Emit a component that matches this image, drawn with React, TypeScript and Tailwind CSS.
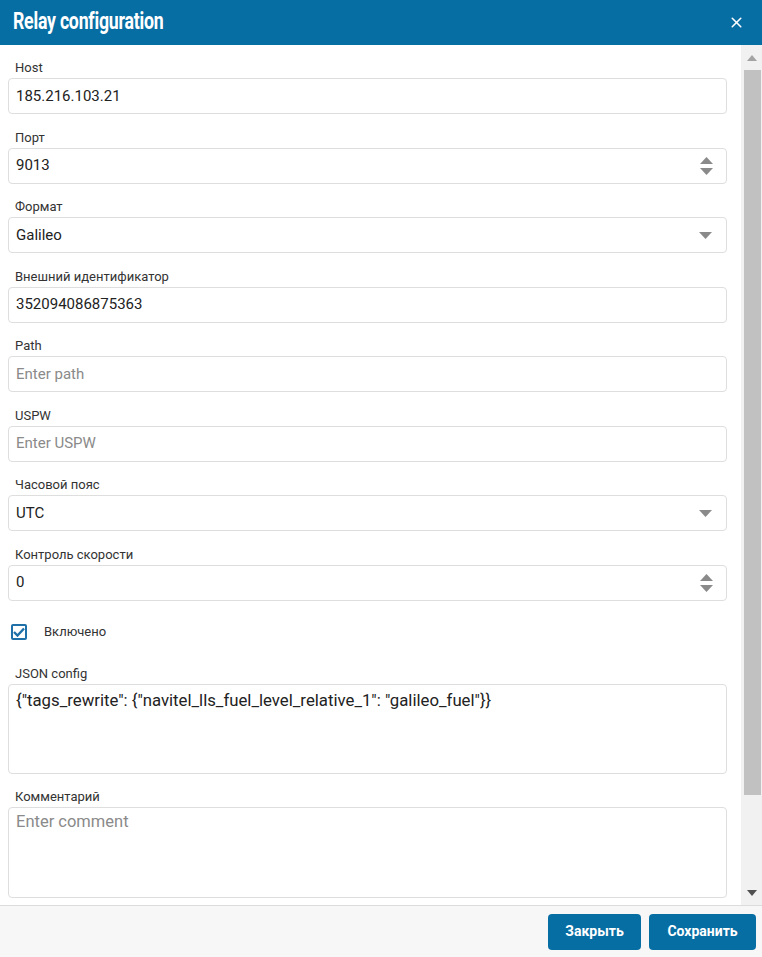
import { X } from "lucide-react";

const font = { fontFamily: "Roboto, 'Liberation Sans', sans-serif" };

function Label({ children }: { children: React.ReactNode }) {
  return <div className="px-[7px] h-[20px] leading-[20px] text-[13px] text-[#333]">{children}</div>;
}

function Spinner() {
  return (
    <div className="flex flex-col items-center gap-[4px] mr-[13px]">
      <svg width="13" height="7" viewBox="0 0 13 7">
        <path d="M0 7 L6.5 0 L13 7 Z" fill="#8a8a8a" />
      </svg>
      <svg width="13" height="7" viewBox="0 0 13 7">
        <path d="M0 0 L6.5 7 L13 0 Z" fill="#8a8a8a" />
      </svg>
    </div>
  );
}

function Caret() {
  return (
    <svg width="13" height="7" viewBox="0 0 13 7" className="mr-[14px]">
      <path d="M0 0 L6.5 7 L13 0 Z" fill="#8a8a8a" />
    </svg>
  );
}

function Field({
  label,
  value,
  placeholder,
  suffix,
}: {
  label: string;
  value?: string;
  placeholder?: string;
  suffix?: React.ReactNode;
}) {
  return (
    <div className="flex flex-col">
      <Label>{label}</Label>
      <div className="h-[36px] rounded-[4px] border border-[#dedede] bg-white flex items-center justify-between pl-[7px]">
        <span className={value ? "text-[15px] text-[#222]" : "text-[15px] text-[#8a8a8a]"}>
          {value ?? placeholder}
        </span>
        {suffix}
      </div>
    </div>
  );
}

export default function App() {
  return (
    <div className="w-[762px] h-[957px] flex flex-col bg-white overflow-hidden" style={font}>
      <header className="h-[45px] shrink-0 bg-[#076ea4] flex items-center justify-between pl-[13px] pr-[17px]">
        <h1 className="inline-block origin-left scale-x-[0.77] whitespace-nowrap text-white text-[23px] font-bold tracking-[-0.3px]">
          Relay configuration
        </h1>
        <X className="w-[17px] h-[17px] text-white" strokeWidth={2.2} />
      </header>

      <div className="flex-1 flex min-h-0">
        <div className="flex-1 overflow-hidden pl-[8px] pr-[14px] pt-[13px] flex flex-col gap-[13.5px]">
          <Field label="Host" value="185.216.103.21" />
          <Field label="Порт" value="9013" suffix={<Spinner />} />
          <Field label="Формат" value="Galileo" suffix={<Caret />} />
          <Field label="Внешний идентификатор" value="352094086875363" />
          <Field label="Path" placeholder="Enter path" />
          <Field label="USPW" placeholder="Enter USPW" />
          <Field label="Часовой пояс" value="UTC" suffix={<Caret />} />
          <Field label="Контроль скорости" value="0" suffix={<Spinner />} />

          <div className="flex items-center h-[36px] shrink-0 pl-[3px]">
            <div className="w-[16px] h-[16px] border-2 border-[#1f6fa8] rounded-[2px] bg-white flex items-center justify-center">
              <svg width="12" height="10" viewBox="0 0 12 10">
                <path d="M1 5 L4.5 8.5 L11 1.5" stroke="#1f6fa8" strokeWidth="2.4" fill="none" />
              </svg>
            </div>
            <span className="ml-[17px] text-[13px] text-[#333]">Включено</span>
          </div>

          <div className="flex flex-col">
            <Label>JSON config</Label>
            <div className="h-[90px] shrink-0 rounded-[4px] border border-[#dedede] bg-white px-[7px] pt-[1px] leading-[28px] text-[16.75px] text-[#222]">
              {'{"tags_rewrite": {"navitel_lls_fuel_level_relative_1": "galileo_fuel"}}'}
            </div>
          </div>

          <div className="flex flex-col">
            <Label>Комментарий</Label>
            <div className="h-[91px] shrink-0 rounded-[4px] border border-[#dedede] bg-white px-[7px] leading-[28px] text-[16.5px] text-[#8a8a8a]">
              Enter comment
            </div>
          </div>
        </div>

        <div className="w-[21px] shrink-0 bg-[#f1f1f1] flex flex-col items-center">
          <div className="h-[25px] w-full flex items-center justify-center">
            <svg width="10" height="6" viewBox="0 0 10 6">
              <path d="M0 6 L5 0 L10 6 Z" fill="#a3a3a3" />
            </svg>
          </div>
          <div className="w-[17px] ml-[2px] h-[725px] bg-[#c1c1c1]" />
          <div className="flex-1" />
          <div className="h-[25px] w-full flex items-center justify-center">
            <svg width="10" height="6" viewBox="0 0 10 6">
              <path d="M0 0 L5 6 L10 0 Z" fill="#505050" />
            </svg>
          </div>
        </div>
      </div>

      <footer className="h-[52px] shrink-0 border-t border-[#dcdcdc] bg-[#f7f7f7] flex items-center justify-end gap-[8px] pr-[6px]">
        <button className="h-[36px] w-[93px] rounded-[4px] bg-[#076ea4] text-white text-[14px] font-bold">Закрыть</button>
        <button className="h-[36px] w-[107px] rounded-[4px] bg-[#076ea4] text-white text-[14px] font-bold">Сохранить</button>
      </footer>
    </div>
  );
}
